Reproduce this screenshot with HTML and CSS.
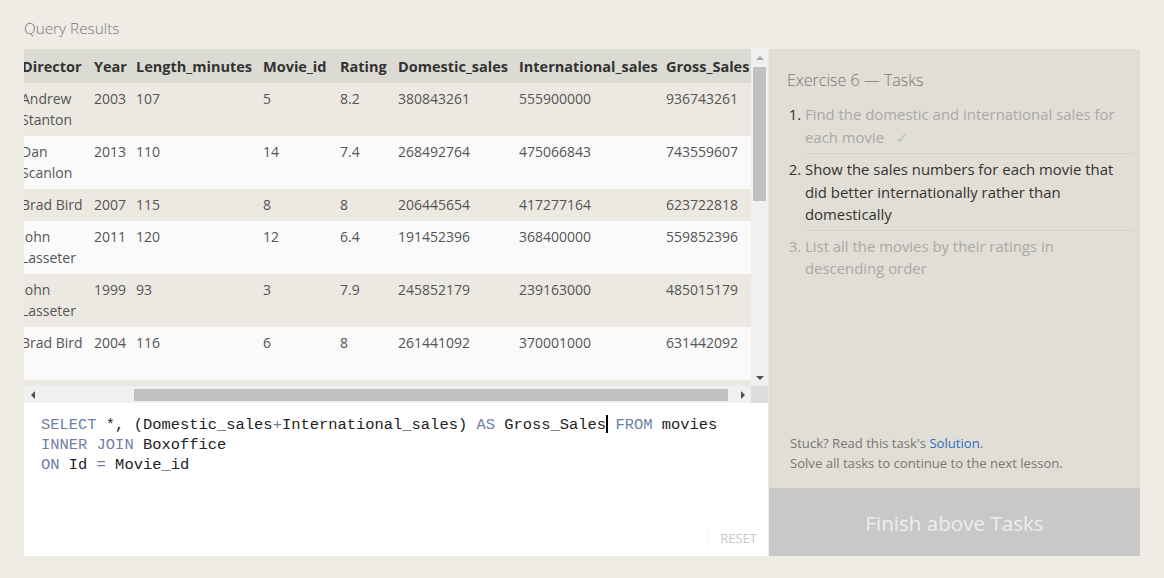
FILE: index.html
```html
<!DOCTYPE html>
<html lang="en">
<head>
<meta charset="utf-8">
<title>Query Results</title>
<link rel="stylesheet" href="styles.css">
</head>
<body>
<div class="page">
  <h2 class="title">Query Results</h2>
  <div class="left">
    <div class="results">
      <div class="results-main">
        <div class="viewport">
          <table class="grid">
            <colgroup>
              <col class="w-id"><col class="w-title"><col class="w-dir"><col class="w-year"><col class="w-len"><col class="w-mid"><col class="w-rat"><col class="w-dom"><col class="w-int"><col class="w-gross">
            </colgroup>
            <thead>
              <tr><th>Id</th><th>Title</th><th>Director</th><th>Year</th><th>Length_minutes</th><th>Movie_id</th><th>Rating</th><th>Domestic_sales</th><th>International_sales</th><th>Gross_Sales</th></tr>
            </thead>
            <tbody>
              <tr><td>5</td><td>Finding Nemo</td><td>Andrew Stanton</td><td>2003</td><td>107</td><td>5</td><td>8.2</td><td>380843261</td><td>555900000</td><td>936743261</td></tr>
              <tr><td>14</td><td>Monsters University</td><td>Dan Scanlon</td><td>2013</td><td>110</td><td>14</td><td>7.4</td><td>268492764</td><td>475066843</td><td>743559607</td></tr>
              <tr><td>8</td><td>Ratatouille</td><td>Brad Bird</td><td>2007</td><td>115</td><td>8</td><td>8</td><td>206445654</td><td>417277164</td><td>623722818</td></tr>
              <tr><td>12</td><td>Cars 2</td><td>John Lasseter</td><td>2011</td><td>120</td><td>12</td><td>6.4</td><td>191452396</td><td>368400000</td><td>559852396</td></tr>
              <tr><td>3</td><td>Toy Story 2</td><td>John Lasseter</td><td>1999</td><td>93</td><td>3</td><td>7.9</td><td>245852179</td><td>239163000</td><td>485015179</td></tr>
              <tr><td>6</td><td>The Incredibles</td><td>Brad Bird</td><td>2004</td><td>116</td><td>6</td><td>8</td><td>261441092</td><td>370001000</td><td>631442092</td></tr>
              <tr><td>9</td><td>WALL-E</td><td>Andrew Stanton</td><td>2008</td><td>104</td><td>9</td><td>8.5</td><td>223808164</td><td>297503696</td><td>521311860</td></tr>
              <tr><td>11</td><td>Up</td><td>Pete Docter</td><td>2009</td><td>101</td><td>11</td><td>8.3</td><td>293004164</td><td>438338580</td><td>731342744</td></tr>
              <tr><td>7</td><td>Cars</td><td>John Lasseter</td><td>2006</td><td>117</td><td>7</td><td>7.2</td><td>244082982</td><td>217900167</td><td>461983149</td></tr>
            </tbody>
          </table>
        </div>
        <div class="vscroll">
          <span class="arrow-box"><span class="tri tri-up"></span></span>
          <span class="vthumb"></span>
          <span class="spacer"></span>
          <span class="arrow-box"><span class="tri tri-down"></span></span>
        </div>
      </div>
      <div class="hscroll">
        <div class="htrack">
          <span class="arrow-box"><span class="tri tri-left"></span></span>
          <span class="hthumb"></span>
          <span class="spacer"></span>
          <span class="arrow-box"><span class="tri tri-right"></span></span>
        </div>
        <div class="corner"></div>
      </div>
    </div>
    <div class="editor">
<pre class="code"><span class="kw">SELECT</span> *, (Domestic_sales<span class="kw">+</span>International_sales) <span class="kw">AS</span> Gross_Sales<span class="cursor"></span> <span class="kw">FROM</span> movies
<span class="kw">INNER JOIN</span> Boxoffice
<span class="kw">ON</span> Id <span class="kw">=</span> Movie_id</pre>
      <span class="reset">RESET</span>
    </div>
  </div>
  <aside class="panel">
    <div class="panel-body">
      <h3 class="panel-title">Exercise 6 — Tasks</h3>
      <ol class="tasks">
        <li class="done">Find the domestic and international sales for each movie <span class="check">✓</span></li>
        <li class="current">Show the sales numbers for each movie that did better internationally rather than domestically</li>
        <li class="todo">List all the movies by their ratings in descending order</li>
      </ol>
      <p class="stuck">Stuck? Read this task's <a class="link" href="#">Solution</a>.<br>Solve all tasks to continue to the next lesson.</p>
    </div>
    <div class="finish">Finish above Tasks</div>
  </aside>
</div>
</body>
</html>
```

FILE: styles.css
```css
* { box-sizing: border-box; }

body {
  margin: 0;
  background: #efece6;
  font-family: "Open Sans", "Segoe UI", sans-serif;
}

.page {
  display: grid;
  grid-template-columns: 744px 371px;
  grid-template-rows: 49px 507px;
  column-gap: 1px;
  padding: 0 24px 22px;
}

.title {
  grid-column: 1;
  grid-row: 1;
  margin: 0;
  padding-top: 18px;
  font-size: 15.3px;
  font-weight: 300;
  line-height: 20px;
  color: #777;
}

.left {
  grid-column: 1;
  grid-row: 2;
  display: flex;
  flex-direction: column;
}

.results {
  height: 354px;
  display: flex;
  flex-direction: column;
}

.results-main {
  display: flex;
  height: 337px;
}

.viewport {
  width: 727px;
  overflow: hidden;
  background: #fafafa;
}

.grid {
  table-layout: fixed;
  width: 856px;
  border-collapse: collapse;
  margin-left: -127px;
}

.w-id { width: 30px; }
.w-title { width: 90px; }
.w-dir { width: 72px; }
.w-year { width: 42px; }
.w-len { width: 127px; }
.w-mid { width: 77px; }
.w-rat { width: 58px; }
.w-dom { width: 121px; }
.w-int { width: 147px; }
.w-gross { width: 92px; }

.grid th {
  background: #dcdbd3;
  color: #333;
  font-weight: 700;
  font-size: 14.5px;
  line-height: 21px;
  text-align: left;
  padding: 7px 5px 6px;
  white-space: nowrap;
}

.grid td {
  font-size: 14px;
  line-height: 21px;
  color: #555;
  padding: 5px 5px 6px;
  vertical-align: top;
}

.grid td:nth-child(3) { padding-left: 4px; }

.grid tbody tr:nth-child(odd) td { background: #ebe9e2; }
.grid tbody tr:nth-child(even) td { background: #fafafa; }

/* scrollbars */
.vscroll {
  width: 17px;
  background: #f0f0f0;
  display: flex;
  flex-direction: column;
  align-items: center;
}

.arrow-box {
  width: 17px;
  height: 17px;
  display: flex;
  align-items: center;
  justify-content: center;
  flex: none;
}

.spacer { flex: 1; }

.vthumb {
  width: 13px;
  height: 134px;
  margin-top: 1px;
  background: #c1c1c1;
}

.tri { width: 0; height: 0; display: block; }
.tri-up {
  border-left: 4px solid transparent;
  border-right: 4px solid transparent;
  border-bottom: 4px solid #a8a8a8;
}
.tri-down {
  border-left: 4px solid transparent;
  border-right: 4px solid transparent;
  border-top: 4px solid #505050;
}
.tri-left {
  border-top: 4px solid transparent;
  border-bottom: 4px solid transparent;
  border-right: 4px solid #505050;
}
.tri-right {
  border-top: 4px solid transparent;
  border-bottom: 4px solid transparent;
  border-left: 4px solid #505050;
}

.hscroll {
  height: 17px;
  display: flex;
}

.htrack {
  width: 727px;
  background: #f0f0f0;
  display: flex;
  align-items: center;
}

.hthumb {
  margin-left: 93px;
  width: 594px;
  height: 12px;
  background: #c1c1c1;
}

.corner {
  width: 17px;
  background: #dcdcdc;
}

/* editor */
.editor {
  position: relative;
  height: 153px;
  background: #fff;
  padding: 12px 17px 10px;
}

.code {
  margin: 0;
  font-family: "Liberation Mono", "DejaVu Sans Mono", monospace;
  font-size: 15.45px;
  line-height: 20px;
  color: #222;
}

.kw { color: #6e80a3; }

.cursor {
  display: inline-block;
  width: 0;
  height: 18px;
  border-left: 2px solid #000;
  margin-right: -2px;
  vertical-align: -4px;
}

.reset {
  position: absolute;
  right: 11px;
  bottom: 8px;
  font-size: 13px;
  line-height: 20px;
  color: #c9c9c9;
  padding-left: 11px;
  border-left: 1px solid #f3f3f3;
}

/* right panel */
.panel {
  grid-column: 2;
  grid-row: 2;
  background: #e1ded5;
  display: flex;
  flex-direction: column;
}

.panel-body {
  flex: 1;
  display: flex;
  flex-direction: column;
  padding: 21px 8px 15px 18px;
}

.panel-title {
  margin: 0;
  font-size: 16px;
  font-weight: 300;
  line-height: 20px;
  color: #777;
}

.tasks {
  margin: 9px 0 0;
  padding-left: 18px;
}

.tasks li {
  font-size: 14.9px;
  line-height: 22.5px;
  padding: 4px 0;
  border-bottom: 1px solid #d4d1c8;
  color: #a9a9a9;
}

.tasks li:last-child { border-bottom: none; }
.tasks li.done::marker { color: #333; }
.tasks li.current { color: #333; }
.tasks li.todo { color: #a9a9a9; }

.check {
  color: #9fcf9f;
  margin-left: 8px;
  font-size: 14px;
}

.stuck {
  margin: auto 0 0;
  padding-left: 3px;
  font-size: 13.1px;
  line-height: 20px;
  color: #777;
}

.link {
  color: #2b6cc4;
  text-decoration: none;
}

.finish {
  height: 68px;
  background: #c8c8c8;
  color: #eeeeee;
  font-size: 20.6px;
  line-height: 70px;
  text-align: center;
}
```
